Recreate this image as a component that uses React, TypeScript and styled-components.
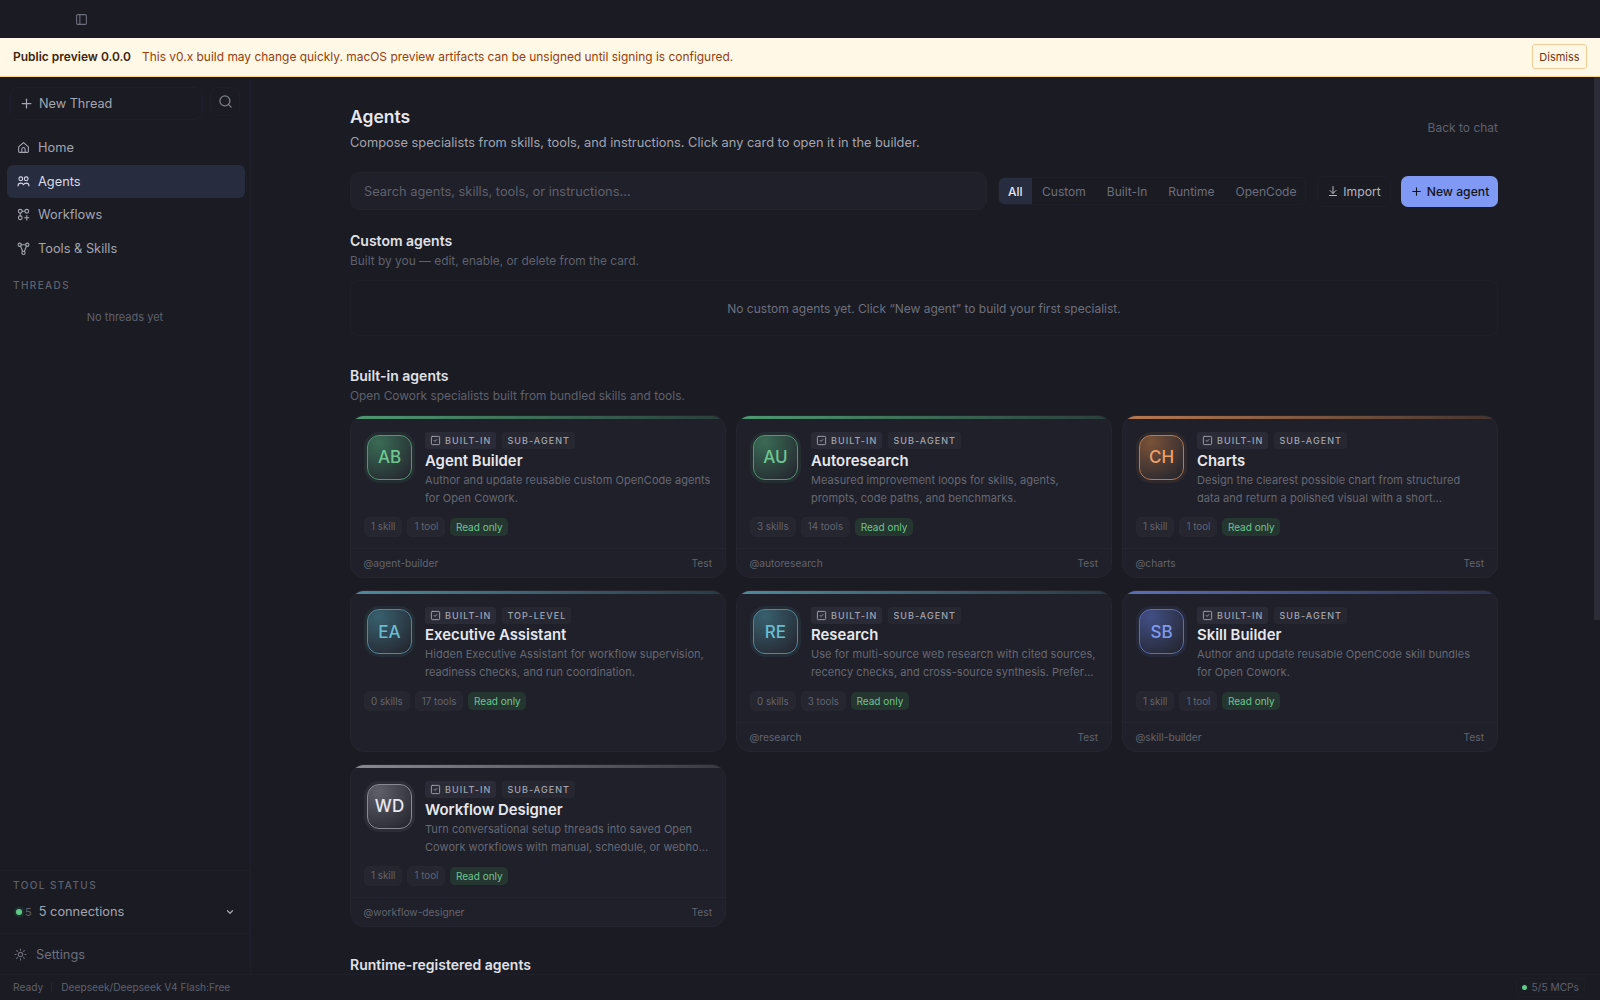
import styled, { createGlobalStyle } from "styled-components";
import { PanelLeft, Plus, Search, ChevronDown, Sun, ArrowDownToLine, SquareCheck } from "lucide-react";

const GlobalStyle = createGlobalStyle`
  html, body {
    margin: 0;
    height: 100%;
    overflow: hidden;
    background: #1a1b23;
    font-family: Inter, "Noto Sans", sans-serif;
    color: #e6e7ec;
  }
  * { box-sizing: border-box; }
`;

type Accent = { main: string; soft: string; text: string };

const green: Accent = { main: "#4f9a72", soft: "#3a6b55", text: "#6fc590" };
const orange: Accent = { main: "#b97a50", soft: "#7a5238", text: "#eea06a" };
const teal: Accent = { main: "#4f8a9c", soft: "#38606e", text: "#69bcd0" };
const blue: Accent = { main: "#5a6fb8", soft: "#414f85", text: "#7f99ee" };
const grey: Accent = { main: "#8a8a94", soft: "#5f5f69", text: "#e8e8ee" };

const agents = [
  { initials: "AB", name: "Agent Builder", kind: "SUB-AGENT", desc: "Author and update reusable custom OpenCode agents for Open Cowork.", skills: "1 skill", tools: "1 tool", handle: "@agent-builder", accent: green },
  { initials: "AU", name: "Autoresearch", kind: "SUB-AGENT", desc: "Measured improvement loops for skills, agents, prompts, code paths, and benchmarks.", skills: "3 skills", tools: "14 tools", handle: "@autoresearch", accent: green },
  { initials: "CH", name: "Charts", kind: "SUB-AGENT", desc: "Design the clearest possible chart from structured data and return a polished visual with a short explanation of the result.", skills: "1 skill", tools: "1 tool", handle: "@charts", accent: orange },
  { initials: "EA", name: "Executive Assistant", kind: "TOP-LEVEL", desc: "Hidden Executive Assistant for workflow supervision, readiness checks, and run coordination.", skills: "0 skills", tools: "17 tools", handle: "", accent: teal },
  { initials: "RE", name: "Research", kind: "SUB-AGENT", desc: "Use for multi-source web research with cited sources, recency checks, and cross-source synthesis. Prefer this agent for reports.", skills: "0 skills", tools: "3 tools", handle: "@research", accent: teal },
  { initials: "SB", name: "Skill Builder", kind: "SUB-AGENT", desc: "Author and update reusable OpenCode skill bundles for Open Cowork.", skills: "1 skill", tools: "1 tool", handle: "@skill-builder", accent: blue },
  { initials: "WD", name: "Workflow Designer", kind: "SUB-AGENT", desc: "Turn conversational setup threads into saved Open Cowork workflows with manual, schedule, or webhook triggers and more.", skills: "1 skill", tools: "1 tool", handle: "@workflow-designer", accent: grey },
];

const Shell = styled.div`
  width: 1600px;
  height: 1000px;
  display: flex;
  flex-direction: column;
  overflow: hidden;
`;

const TopBar = styled.div`
  height: 38px;
  flex: none;
  display: flex;
  align-items: center;
  padding-left: 75px;
  color: #6d6f7b;
`;

const Banner = styled.div`
  height: 39px;
  flex: none;
  display: flex;
  align-items: center;
  gap: 11px;
  padding: 0 13px 1px;
  background: #fff8e6;
  border-bottom: 1px solid #fbd38d;
  font-size: 12px;
`;

const BannerTitle = styled.strong`
  font-weight: 600;
  color: #3f2410;
`;

const BannerText = styled.span`
  color: #96400f;
  font-size: 11.94px;
  flex: 1;
`;

const DismissButton = styled.button`
  height: 25px;
  width: 55px;
  padding: 0;
  background: transparent;
  border: 1px solid #f3cf97;
  border-radius: 3px;
  color: #78350f;
  font: 400 11px Inter, sans-serif;
`;

const Body = styled.div`
  flex: 1;
  min-height: 0;
  display: flex;
`;

const Sidebar = styled.aside`
  width: 251px;
  flex: none;
  display: flex;
  flex-direction: column;
  border-right: 1px solid #1e1f28;
`;

const SideTop = styled.div`
  display: flex;
  gap: 7px;
  padding: 10px 10px 0 10px;
`;

const NewThread = styled.div`
  width: 195px;
  height: 33px;
  display: flex;
  align-items: center;
  gap: 5px;
  padding-left: 8px;
  border: 1px solid #1e1f28;
  border-radius: 8px;
  font-size: 12.7px;
  color: #a3a5b0;
`;

const SearchButton = styled.div`
  width: 30px;
  height: 29px;
  display: flex;
  align-items: center;
  justify-content: center;
  border: 1px solid #1e1f28;
  border-radius: 8px;
  color: #7f818d;
`;

const Nav = styled.nav`
  display: flex;
  flex-direction: column;
  padding: 11px 5px 0 7px;
`;

const NavItem = styled.div<{ $active?: boolean }>`
  height: 33.6px;
  display: flex;
  align-items: center;
  gap: 8px;
  padding-left: 10px;
  border-radius: 6px;
  font-size: 12.8px;
  background: ${({ $active }) => ($active ? "#272c3e" : "transparent")};
  color: ${({ $active }) => ($active ? "#d9dbe4" : "#a3a5b0")};
`;

const NavIcon = styled.svg`
  width: 13px;
  height: 13px;
  flex: none;
  fill: none;
  stroke: currentColor;
  stroke-width: 2;
  stroke-linecap: round;
  stroke-linejoin: round;
`;

const SideLabel = styled.div`
  padding-left: 13px;
  font-size: 10px;
  font-weight: 500;
  letter-spacing: 1.4px;
  color: #5f616d;
`;

const ThreadsLabel = styled(SideLabel)`
  margin-top: 14px;
`;

const NoThreads = styled.div`
  margin-top: 19px;
  text-align: center;
  font-size: 11px;
  color: #5f616d;
`;

const ToolStatus = styled.div`
  margin-top: auto;
  height: 64px;
  padding-top: 8px;
  border-top: 1px solid #1e1f28;
  border-bottom: 1px solid #1e1f28;
`;

const ConnRow = styled.div`
  display: flex;
  align-items: center;
  margin-top: 13px;
  padding: 0 15px 0 16px;
  font-size: 12.8px;
  color: #a3a5b0;
`;

const Dot = styled.span`
  width: 6px;
  height: 6px;
  border-radius: 50%;
  background: #5dcb87;
  box-shadow: 0 0 4px #5dcb8788;
`;

const ConnCount = styled.span`
  margin: 0 7px 0 3px;
  font-size: 11px;
  color: #5f616d;
`;

const ConnText = styled.span`
  flex: 1;
`;

const SettingsRow = styled.div`
  height: 40px;
  display: flex;
  align-items: center;
  gap: 9px;
  padding-left: 14px;
  font-size: 12.8px;
  color: #6d6f7b;
`;

const Main = styled.main`
  flex: 1;
  min-width: 0;
  position: relative;
  padding: 28px 102px 0 99px;
  overflow: hidden;
`;

const ScrollThumb = styled.div`
  position: absolute;
  top: 0;
  right: 0;
  width: 6px;
  height: 543px;
  background: #2b2c35;
`;

const HeaderRow = styled.div`
  display: flex;
  justify-content: space-between;
  align-items: flex-end;
`;

const PageTitle = styled.h1`
  margin: 0;
  font-size: 17.5px;
  line-height: 24px;
  font-weight: 600;
  color: #e6e7ec;
`;

const PageSub = styled.p`
  margin: 4px 0 0;
  font-size: 12.8px;
  line-height: 20px;
  color: #a3a5b0;
`;

const BackLink = styled.span`
  font-size: 12px;
  line-height: 20px;
  padding-bottom: 15px;
  color: #5f616d;
`;

const Toolbar = styled.div`
  display: flex;
  align-items: center;
  margin-top: 19px;
`;

const SearchBox = styled.div`
  width: 637px;
  height: 38px;
  display: flex;
  align-items: center;
  padding-left: 13px;
  background: #1f2029;
  border: 1px solid #22232d;
  border-radius: 9px;
  font-size: 12.85px;
  color: #5f616d;
`;

const Tabs = styled.div`
  margin-left: 11px;
  width: 308px;
  height: 28px;
  display: flex;
  align-items: center;
  border: 1px solid #1e1f28;
  border-radius: 6px;
  font-size: 12px;
  color: #6d6f7b;
`;

const Tab = styled.span<{ $active?: boolean }>`
  height: 100%;
  display: flex;
  align-items: center;
  white-space: nowrap;
  padding: 0 ${({ $active }) => ($active ? "9px" : "10.5px")};
  border-radius: ${({ $active }) => ($active ? "5px 0 0 5px" : "0")};
  background: ${({ $active }) => ($active ? "#272c3e" : "transparent")};
  color: ${({ $active }) => ($active ? "#e6e7ec" : "#6d6f7b")};
  font-weight: ${({ $active }) => ($active ? 500 : 400)};
`;

const ImportButton = styled.div`
  margin-left: 11px;
  width: 74px;
  height: 31px;
  display: flex;
  align-items: center;
  justify-content: center;
  gap: 4px;
  border: 1px solid #1e1f28;
  border-radius: 7px;
  font-size: 12.2px;
  color: #b4b6c0;
`;

const NewAgentButton = styled.div`
  margin-left: 10px;
  width: 97px;
  height: 31px;
  display: flex;
  align-items: center;
  justify-content: center;
  gap: 4px;
  background: #7f99f5;
  border-radius: 7px;
  font-size: 12.2px;
  font-weight: 500;
  color: #14151c;
`;

const SectionTitle = styled.h2<{ $top: number }>`
  margin: ${({ $top }) => $top}px 0 0;
  font-size: 14px;
  line-height: 20px;
  font-weight: 600;
  color: #e0e1e7;
`;

const SectionSub = styled.p`
  margin: 1px 0 0;
  font-size: 11.9px;
  line-height: 18px;
  color: #5f616d;
`;

const EmptyBox = styled.div`
  margin-top: 10px;
  height: 56px;
  display: flex;
  align-items: center;
  justify-content: center;
  border: 1px solid #1e1f28;
  border-radius: 9px;
  font-size: 12px;
  color: #6d6f7b;
`;

const CardGrid = styled.div`
  margin-top: 10.4px;
  display: grid;
  grid-template-columns: repeat(3, 376px);
  grid-auto-rows: 162.5px;
  gap: 12px 10px;
`;

const Card = styled.article`
  position: relative;
  display: flex;
  flex-direction: column;
  background: #1f2029;
  border: 1px solid #24252f;
  border-radius: 14px;
  overflow: hidden;
`;

const AccentBar = styled.div<{ $from: string; $to: string }>`
  height: 3px;
  flex: none;
  background: linear-gradient(90deg, ${({ $from }) => $from}, ${({ $to }) => $to}66);
`;

const CardTop = styled.div`
  flex: 1;
  padding: 13px 13px 0 13px;
`;

const CardHead = styled.div`
  display: flex;
  gap: 13px;
`;

const Avatar = styled.div<{ $accent: Accent }>`
  width: 45px;
  height: 45px;
  margin: 2.5px 0 0 3px;
  flex: none;
  display: flex;
  align-items: center;
  justify-content: center;
  border-radius: 12px;
  border: 1px solid ${({ $accent }) => $accent.main};
  background: radial-gradient(circle at 25% 15%, ${({ $accent }) => $accent.soft}, #24252e 95%);
  box-shadow: 0 0 0 3px ${({ $accent }) => $accent.soft}30;
  font-size: 17px;
  font-weight: 500;
  color: ${({ $accent }) => $accent.text};
`;

const HeadText = styled.div`
  min-width: 0;
  flex: 1;
`;

const BadgeRow = styled.div`
  display: flex;
  gap: 6px;
`;

const Badge = styled.span<{ $strong?: boolean }>`
  height: 17px;
  display: inline-flex;
  align-items: center;
  gap: 4px;
  padding: 0 5px;
  border-radius: 3px;
  background: ${({ $strong }) => ($strong ? "#2a2b36" : "#262731")};
  font-size: 9px;
  font-weight: 500;
  letter-spacing: 1.05px;
  color: #a3a5b0;
`;

const CardName = styled.h3`
  margin: 1.5px 0 0;
  font-size: 14.9px;
  line-height: 20px;
  font-weight: 600;
  color: #e6e7ec;
`;

const CardDesc = styled.p`
  margin: 0;
  font-size: 11px;
  letter-spacing: 0.05px;
  line-height: 18px;
  color: #666873;
  display: -webkit-box;
  -webkit-box-orient: vertical;
  -webkit-line-clamp: 2;
  overflow: hidden;
`;

const ChipRow = styled.div`
  display: flex;
  align-items: center;
  gap: 5px;
  margin-top: 10px;
`;

const Chip = styled.span`
  height: 20px;
  display: flex;
  align-items: center;
  padding: 0 6px;
  border: 1px solid #262731;
  border-radius: 5px;
  background: #252630;
  font-size: 9.8px;
  color: #62646f;
`;

const ReadOnlyChip = styled.span`
  height: 18px;
  display: flex;
  align-items: center;
  padding: 0 5.5px;
  border-radius: 5px;
  background: #25352f;
  font-size: 10px;
  color: #6fc590;
`;

const CardFoot = styled.div`
  height: 29px;
  flex: none;
  display: flex;
  align-items: center;
  justify-content: space-between;
  padding: 0 13px 0 12.5px;
  border-top: 1px solid #24252f;
  font-size: 10.2px;
  color: #62646f;
`;

const StatusBar = styled.footer`
  height: 26px;
  flex: none;
  display: flex;
  align-items: center;
  padding: 0 15px 1px 13px;
  border-top: 1px solid #1e1f28;
  font-size: 10.2px;
  color: #5f616d;
`;

const StatusDivider = styled.span`
  width: 1px;
  height: 10px;
  margin: 0 9px 0 8px;
  background: #25262f;
`;

const StatusSpacer = styled.span`
  flex: 1;
`;

const McpBadge = styled.span`
  height: 19px;
  display: flex;
  align-items: center;
  gap: 5px;
  padding: 0 5px;
  border: 1px solid #1e1f28;
  border-radius: 5px;
`;

const McpDot = styled.span`
  width: 5px;
  height: 5px;
  border-radius: 50%;
  background: #5dcb87;
`;

const BadgeIcon = styled(SquareCheck)`
  flex: none;
`;

function HomeIcon() {
  return (
    <NavIcon viewBox="0 0 24 24">
      <path d="M3 11 12 3l9 8v8a2 2 0 0 1-2 2H5a2 2 0 0 1-2-2z" />
      <path d="M9 21v-6a3 3 0 0 1 6 0v6" />
    </NavIcon>
  );
}

function AgentsIcon() {
  return (
    <NavIcon viewBox="0 0 24 24">
      <circle cx="7" cy="7" r="3.5" />
      <circle cx="17" cy="7" r="3.5" />
      <path d="M2 20c0-3 2.5-5 5-5 2 0 4 1 5 3 1-2 3-3 5-3 2.500 0 5 2 5 5" />
    </NavIcon>
  );
}

function WorkflowIcon() {
  return (
    <NavIcon viewBox="0 0 24 24">
      <circle cx="6" cy="6" r="3.5" />
      <circle cx="18" cy="6" r="3.5" />
      <circle cx="6" cy="18" r="3.5" />
      <path d="M9.500 6h5M6 9.500v5M18 14v8M14 18h8" />
    </NavIcon>
  );
}

function ToolsIcon() {
  return (
    <NavIcon viewBox="0 0 24 24">
      <circle cx="5" cy="5" r="3" />
      <circle cx="19" cy="5" r="3" />
      <circle cx="12" cy="20" r="3" />
      <path d="M8 5h8M6.500 7.500l4 10M17.500 7.500l-4 10" />
    </NavIcon>
  );
}

function AgentCard({ agent }: { agent: (typeof agents)[number] }) {
  return (
    <Card>
      <AccentBar $from={agent.accent.main} $to={agent.accent.soft} />
      <CardTop>
        <CardHead>
          <Avatar $accent={agent.accent}>{agent.initials}</Avatar>
          <HeadText>
            <BadgeRow>
              <Badge $strong><BadgeIcon size={11} />BUILT-IN</Badge>
              <Badge>{agent.kind}</Badge>
            </BadgeRow>
            <CardName>{agent.name}</CardName>
            <CardDesc>{agent.desc}</CardDesc>
          </HeadText>
        </CardHead>
        <ChipRow>
          <Chip>{agent.skills}</Chip>
          <Chip>{agent.tools}</Chip>
          <ReadOnlyChip>Read only</ReadOnlyChip>
        </ChipRow>
      </CardTop>
      {agent.handle && (
        <CardFoot>
          <span>{agent.handle}</span>
          <span>Test</span>
        </CardFoot>
      )}
    </Card>
  );
}

export default function App() {
  return (
    <Shell>
      <GlobalStyle />
      <TopBar>
        <PanelLeft size={13} />
      </TopBar>
      <Banner>
        <BannerTitle>Public preview 0.0.0</BannerTitle>
        <BannerText>This v0.x build may change quickly. macOS preview artifacts can be unsigned until signing is configured.</BannerText>
        <DismissButton>Dismiss</DismissButton>
      </Banner>
      <Body>
        <Sidebar>
          <SideTop>
            <NewThread><Plus size={15} />New Thread</NewThread>
            <SearchButton><Search size={15} /></SearchButton>
          </SideTop>
          <Nav>
            <NavItem><HomeIcon />Home</NavItem>
            <NavItem $active><AgentsIcon />Agents</NavItem>
            <NavItem><WorkflowIcon />Workflows</NavItem>
            <NavItem><ToolsIcon />Tools &amp; Skills</NavItem>
          </Nav>
          <ThreadsLabel>THREADS</ThreadsLabel>
          <NoThreads>No threads yet</NoThreads>
          <ToolStatus>
            <SideLabel>TOOL STATUS</SideLabel>
            <ConnRow>
              <Dot />
              <ConnCount>5</ConnCount>
              <ConnText>5 connections</ConnText>
              <ChevronDown size={10} strokeWidth={3} />
            </ConnRow>
          </ToolStatus>
          <SettingsRow><Sun size={13} />Settings</SettingsRow>
        </Sidebar>
        <Main>
          <ScrollThumb />
          <HeaderRow>
            <div>
              <PageTitle>Agents</PageTitle>
              <PageSub>Compose specialists from skills, tools, and instructions. Click any card to open it in the builder.</PageSub>
            </div>
            <BackLink>Back to chat</BackLink>
          </HeaderRow>
          <Toolbar>
            <SearchBox>Search agents, skills, tools, or instructions...</SearchBox>
            <Tabs>
              <Tab $active>All</Tab>
              <Tab>Custom</Tab>
              <Tab>Built-In</Tab>
              <Tab>Runtime</Tab>
              <Tab>OpenCode</Tab>
            </Tabs>
            <ImportButton><ArrowDownToLine size={12} />Import</ImportButton>
            <NewAgentButton><Plus size={13} />New agent</NewAgentButton>
          </Toolbar>
          <SectionTitle $top={21}>Custom agents</SectionTitle>
          <SectionSub>Built by you — edit, enable, or delete from the card.</SectionSub>
          <EmptyBox>No custom agents yet. Click “New agent” to build your first specialist.</EmptyBox>
          <SectionTitle $top={30}>Built-in agents</SectionTitle>
          <SectionSub>Open Cowork specialists built from bundled skills and tools.</SectionSub>
          <CardGrid>
            {agents.map((agent) => (
              <AgentCard key={agent.initials} agent={agent} />
            ))}
          </CardGrid>
          <SectionTitle $top={28}>Runtime-registered agents</SectionTitle>
        </Main>
      </Body>
      <StatusBar>
        <span>Ready</span>
        <StatusDivider />
        <span>Deepseek/Deepseek V4 Flash:Free</span>
        <StatusSpacer />
        <McpBadge><McpDot />5/5 MCPs</McpBadge>
      </StatusBar>
    </Shell>
  );
}
